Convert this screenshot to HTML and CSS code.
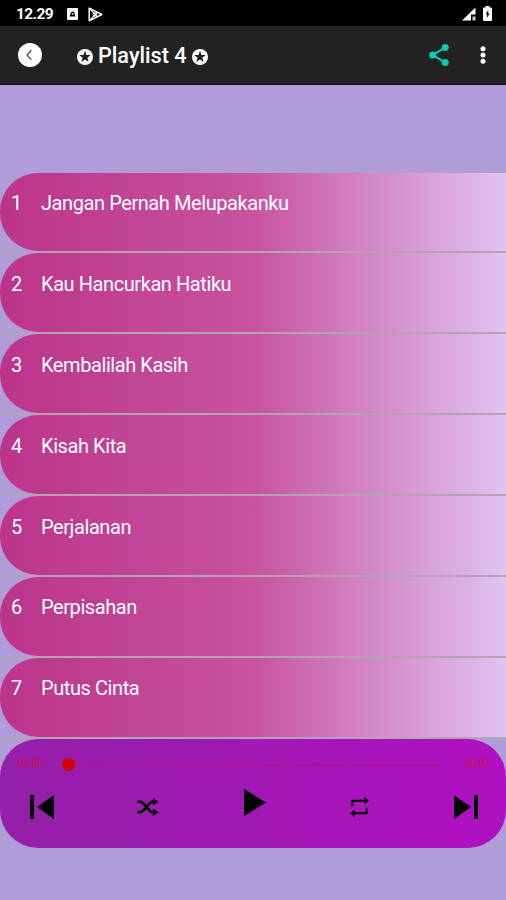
FILE: index.html
```html
<!DOCTYPE html>
<html lang="id">

<head>
<meta charset="UTF-8">
<title>Playlist 4</title>
<link rel="stylesheet" href="styles.css">
</head>

<body>

<!-- status bar -->
<div class="statusbar">
    <span class="clock">12.29</span>
    <svg class="notif" width="11" height="12" viewBox="0 0 11 12">
        <rect width="11" height="12" rx="1" fill="#fff"/>
        <path d="M2.6 8.6L4 4.2Q5.5 2.6 7 4.2L8.4 8.6Z" fill="#000"/>
        <circle cx="5.5" cy="5.8" r="0.9" fill="#fff"/>
    </svg>
    <svg class="play-store" width="15" height="15" viewBox="0 0 15 15" fill="none" stroke="#fff">
        <path d="M1.2 1.2V13.8L13.8 7.5Z" stroke-width="1.5" stroke-linejoin="round"/>
        <path d="M1.5 1.5L9.5 9.8M1.5 13.5L9.5 5.2" stroke-width="1.1"/>
        <circle cx="6.8" cy="7.5" r="1.8" stroke-width="1"/>
    </svg>
    <svg class="signal" width="14" height="14" viewBox="0 0 14 14">
        <path d="M0 13.5L13.5 0.5V7.5H9V13.5Z" fill="#fff"/>
        <rect x="10.5" y="9.5" width="3" height="4" fill="#ccc"/>
    </svg>
    <svg class="battery" width="9" height="15" viewBox="0 0 9 15">
        <path d="M2.5 0H6.5V1.5H8Q9 1.5 9 2.5V14Q9 15 8 15H1Q0 15 0 14V2.5Q0 1.5 1 1.5H2.5Z" fill="#fff"/>
        <path d="M5.2 4L2.7 8.2H4.1V12L6.5 7.4H5.2Z" fill="#000"/>
    </svg>
</div>

<!-- toolbar -->
<div class="toolbar">
    <svg class="back" width="24" height="24" viewBox="0 0 24 24">
        <circle cx="12" cy="12" r="12" fill="#fff"/>
        <path d="M13.4 7.3L9 12L13.4 16.7" fill="none" stroke="#555" stroke-width="1.3"/>
    </svg>
    <div class="title">
        <svg class="star" width="16" height="16" viewBox="0 0 16 16">
            <circle cx="8" cy="8" r="8" fill="#fff"/>
            <path d="M8 1.8L9.5 6H13.8L10.4 8.7L11.6 13L8 10.5L4.4 13L5.6 8.7L2.2 6H6.5Z" fill="#222"/>
        </svg>
        <span>Playlist 4</span>
        <svg class="star" width="16" height="16" viewBox="0 0 16 16">
            <circle cx="8" cy="8" r="8" fill="#fff"/>
            <path d="M8 1.8L9.5 6H13.8L10.4 8.7L11.6 13L8 10.5L4.4 13L5.6 8.7L2.2 6H6.5Z" fill="#222"/>
        </svg>
    </div>
    <svg class="share" width="20" height="22" viewBox="0 0 20 22">
        <path d="M16 3.6L3.6 11L16 18.4" fill="none" stroke="#0cc8b0" stroke-width="2.2"/>
        <circle cx="16.2" cy="3.6" r="3.5" fill="#0cc8b0"/>
        <circle cx="3.6" cy="11" r="3.5" fill="#0cc8b0"/>
        <circle cx="16.2" cy="18.4" r="3.5" fill="#0cc8b0"/>
    </svg>
    <svg class="more" width="6" height="18" viewBox="0 0 6 18" fill="#fff">
        <circle cx="3" cy="2.7" r="2.5"/>
        <circle cx="3" cy="9" r="2.5"/>
        <circle cx="3" cy="15.3" r="2.5"/>
    </svg>
</div>

<!-- songs -->
<div class="songs">
    <div class="row"><div class="song"><span class="num">1</span>Jangan Pernah Melupakanku</div></div>
    <div class="row"><div class="song"><span class="num">2</span>Kau Hancurkan Hatiku</div></div>
    <div class="row"><div class="song"><span class="num">3</span>Kembalilah Kasih</div></div>
    <div class="row"><div class="song"><span class="num">4</span>Kisah Kita</div></div>
    <div class="row"><div class="song"><span class="num">5</span>Perjalanan</div></div>
    <div class="row"><div class="song"><span class="num">6</span>Perpisahan</div></div>
    <div class="row"><div class="song"><span class="num">7</span>Putus Cinta</div></div>
</div>

<!-- player -->
<div class="player">
    <div class="progress">
        <span class="time">00:00</span>
        <div class="thumb"></div>
        <div class="track"></div>
        <span class="time">00:00</span>
    </div>
    <div class="controls">
        <svg class="prev" width="24" height="24" viewBox="0 0 24 24">
            <path d="M0 0H4V24H0ZM24 0V24L7 12Z"/>
        </svg>
        <svg class="shuffle" width="22" height="18" viewBox="0 0 22 18">
            <path d="M0.5 3.8H3C8.5 3.8 10.5 14.2 16 14.2H17.5M0.5 14.2H3C8.5 14.2 10.5 3.8 16 3.8H17.5" fill="none" stroke="#000" stroke-width="2.7"/>
            <path d="M16 0L21.5 3.8L16 7.6ZM16 10.4L21.5 14.2L16 18Z"/>
        </svg>
        <svg class="play" width="22" height="27" viewBox="0 0 22 27">
            <path d="M0 0L22 13.5L0 27Z"/>
        </svg>
        <svg class="repeat" width="19" height="20" viewBox="0 0 19 20">
            <path d="M2.4 9.3V3.8H15M16.6 10.7V16.2H4" fill="none" stroke="#000" stroke-width="2"/>
            <path d="M14.4 0L18.8 3.8L14.4 7.6ZM4.6 12.4L0.2 16.2L4.6 20Z"/>
        </svg>
        <svg class="next" width="24" height="24" viewBox="0 0 24 24">
            <path d="M20 0H24V24H20ZM0 0V24L17 12Z"/>
        </svg>
    </div>
</div>

</body>
</html>
```

FILE: styles.css
```css
body {
    margin: 0;
    height: 900px;
    overflow: hidden;
    background-color: #b09cd9;
    font-family: Roboto, "Liberation Sans", sans-serif;
    color: #fff;
}

svg {
    display: block;
    flex: none;
}

.statusbar {
    display: flex;
    align-items: center;
    box-sizing: border-box;
    height: 26px;
    padding: 2px 14px 0 16px;
    background-color: #000;
}

.clock {
    width: 51px;
    font-size: 15.5px;
    font-weight: 700;
    letter-spacing: -0.6px;
}

.play-store {
    margin-left: 10px;
}

.signal {
    margin-left: auto;
}

.battery {
    margin: -2px 0 0 7px;
}

.toolbar {
    display: flex;
    align-items: center;
    box-sizing: border-box;
    height: 59px;
    padding: 0 20px 0 18px;
    background-color: #222;
    border-bottom: 1px solid #111;
}

.title {
    display: flex;
    align-items: center;
    gap: 5px;
    margin-left: 35px;
    font-size: 21.7px;
    font-weight: 500;
}

.star {
    margin-top: 3px;
}

.share {
    margin-left: auto;
    margin-right: 31px;
}

.songs {
    padding-top: 87.6px;
}

.row {
    height: 78.9px;
    border-bottom: 2px solid #b3a3b5;
}

.song {
    display: flex;
    box-sizing: border-box;
    height: 100%;
    padding: 18.4px 0 0 11px;
    border-radius: 38px 0 0 38px;
    background: linear-gradient(90deg, #bb348b, #c7539f 50%, #e0c3f2);
    font-size: 20px;
    letter-spacing: -0.42px;
    line-height: 24px;
}

.num {
    width: 30px;
}

.player {
    box-sizing: border-box;
    height: 109px;
    padding: 16px 0 0;
    border-radius: 38px;
    background: linear-gradient(90deg, #9320a8, #b010c2);
}

.progress {
    display: flex;
    align-items: center;
    height: 20px;
    padding: 0 15px 0 18px;
}

.time {
    width: 26px;
    margin-top: -3px;
    font-size: 10px;
    color: #cc1145;
}

.thumb {
    width: 13px;
    height: 13px;
    margin-left: 18px;
    border-radius: 50%;
    background-color: #d60000;
}

.track {
    flex: 1;
    height: 2px;
    margin-right: 25px;
    background-color: #ad1590;
}

.controls {
    display: flex;
    justify-content: space-between;
    align-items: center;
    height: 30px;
    margin-top: 17px;
    padding: 0 28px 0 30px;
}

.shuffle {
    margin-left: -2px;
}

.play {
    margin-top: -8px;
}
```
